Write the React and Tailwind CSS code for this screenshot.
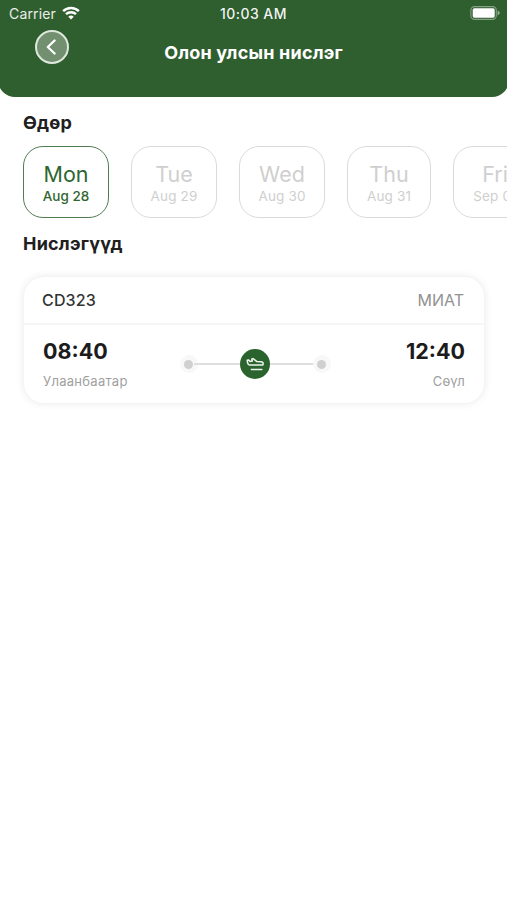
import { useState } from "react";

const DAYS = [
  { day: "Mon", date: "Aug 28", width: "w-[86px]" },
  { day: "Tue", date: "Aug 29", width: "w-[86px]" },
  { day: "Wed", date: "Aug 30", width: "w-[86px]" },
  { day: "Thu", date: "Aug 31", width: "w-[84px]" },
  { day: "Fri", date: "Sep 01", width: "w-[84px]" },
];

function WifiIcon() {
  return (
    <svg className="ml-[6px] h-[14px] w-[18px]" viewBox="0 0 19 14" fill="none" stroke="white" strokeWidth="2.6">
      <path d="M1.2 5.1a11.8 11.8 0 0 1 16.6 0" />
      <path d="M4.2 8.3a7.6 7.6 0 0 1 10.6 0" />
      <path d="M9.5 13.8 6.6 10.9a4.2 4.2 0 0 1 5.8 0z" fill="white" stroke="none" />
    </svg>
  );
}

function BatteryIcon() {
  return (
    <svg className="h-[14px] w-[31px]" viewBox="0 0 31 14" fill="none">
      <rect x="0.9" y="0.6" width="25.4" height="12.8" rx="3.6" stroke="white" strokeOpacity="0.42" strokeWidth="1.1" />
      <rect x="2.7" y="2.3" width="22" height="9.4" rx="1.6" fill="white" />
      <path d="M27.6 4.6c2.8 1 2.8 3.8 0 4.8z" fill="white" fillOpacity="0.5" />
    </svg>
  );
}

function PlaneIcon() {
  return (
    <svg className="mt-[1px] h-[16px] w-[20px]" viewBox="0 0 20 16" fill="none" stroke="#f0f6ee" strokeWidth="1.5" strokeLinejoin="round" strokeLinecap="round">
      <path d="M2.2 3.2 3.5 2.9l1.6 1.6 2.2-.4-.5-2.1 1.3-.4 3.8 3 4 .1c1.5.1 2.3.9 2.2 2.1l-.3 1.3H5.1C3.2 8.1 2.4 6.6 2.2 3.2z" />
      <path d="M6.4 12.4h10.4" />
    </svg>
  );
}

function Header() {
  return (
    <header className="-mx-[2px] h-[97px] rounded-b-[17px] bg-[#2f5e2f] px-[2px] text-white">
      <div className="grid h-[26px] grid-cols-3 items-center pl-[9px] pr-[6px]">
        <div className="flex items-center text-[14px] tracking-[0.15px] text-white/90">
          Carrier
          <WifiIcon />
        </div>
        <div className="whitespace-nowrap pr-[3px] text-center text-[14px] font-medium tracking-[0.45px] text-white/95">10:03 AM</div>
        <div className="flex justify-end">
          <BatteryIcon />
        </div>
      </div>
      <div className="grid grid-cols-[1fr_auto_1fr] items-start pt-[4px]">
        <button className="ml-[35px] flex size-[34px] items-center justify-center rounded-full border-2 border-[#dfe8dd] bg-[#728f70]">
          <svg className="mr-[1px] h-[16px] w-[11px]" viewBox="0 0 11 16" fill="none" stroke="white" strokeWidth="2.3" strokeLinecap="round" strokeLinejoin="round">
            <path d="M8.6 1.5 1.8 8l6.8 6.5" />
          </svg>
        </button>
        <h1 className="mt-[10px] text-[18px] font-bold leading-[26px] tracking-[0.2px]">Олон улсын нислэг</h1>
      </div>
    </header>
  );
}

function DayCard({ item, active, onClick }) {
  return (
    <button
      onClick={onClick}
      className={`${item.width} h-[72px] shrink-0 rounded-[20px] border-[1.5px] pt-[2px] text-center ${
        active ? "border-[#4f7d50] text-[#2f6630]" : "border-[#dadada] text-[#cfcfcf]"
      }`}
    >
      <div className="text-[21.5px] leading-[25px]">{item.day}</div>
      <div className={`whitespace-nowrap text-[13.5px] leading-[18px] ${active ? "font-medium" : "tracking-[0.15px]"}`}>
        {item.date}
      </div>
    </button>
  );
}

function Dot() {
  return (
    <span className="flex size-[18px] shrink-0 items-center justify-center rounded-full bg-[#f8f8f8]">
      <span className="size-[9px] rounded-full bg-[#d0d0d0]" />
    </span>
  );
}

function FlightCard() {
  return (
    <div className="mx-[24px] mt-[20px] h-[126px] w-[460px] rounded-[20px] bg-white shadow-[0_0_9px_rgba(0,0,0,0.1)]">
      <div className="flex h-[48px] items-center justify-between border-b-2 border-[#f6f6f6] pl-[18px] pr-[20px]">
        <span className="text-[16px] font-medium tracking-[0.15px] text-[#333]">CD323</span>
        <span className="text-[16px] text-[#929292]">МИАТ</span>
      </div>
      <div className="grid grid-cols-[1fr_151px_1fr] px-[19px] pt-[12px]">
        <div>
          <div className="text-[21.5px] font-bold leading-[28px] text-[#1c1c1c]">08:40</div>
          <div className="mt-[6px] text-[13px] leading-[20px] tracking-[0.28px] text-[#a0a0a0]">Улаанбаатар</div>
        </div>
        <div className="ml-[1px] mt-[12px] -mr-[1px] flex h-[30px] items-center">
          <Dot />
          <span className="-ml-[4px] h-[1.5px] flex-1 bg-[#dedede]" />
          <span className="flex size-[30px] items-center justify-center rounded-full bg-[#2a632d]">
            <PlaneIcon />
          </span>
          <span className="-mr-[4px] h-[1.5px] flex-1 bg-[#dedede]" />
          <Dot />
        </div>
        <div className="text-right">
          <div className="text-[21.5px] font-bold leading-[28px] text-[#1c1c1c]">12:40</div>
          <div className="mt-[6px] text-[13px] leading-[20px] tracking-[0.28px] text-[#a0a0a0]">Сөүл</div>
        </div>
      </div>
    </div>
  );
}

export default function App() {
  const [selected, setSelected] = useState(0);

  return (
    <div className="h-[900px] w-[507px] overflow-hidden bg-white font-['Inter',sans-serif]">
      <Header />
      <h2 className="ml-[23px] mt-[13px] text-[18px] font-bold leading-[26px] tracking-[0.2px] text-[#202020]">Өдөр</h2>
      <div className="mt-[10px] flex gap-[22px] overflow-hidden pl-[23px]">
        {DAYS.map((item, i) => (
          <DayCard key={item.day} item={item} active={i === selected} onClick={() => setSelected(i)} />
        ))}
      </div>
      <h2 className="ml-[23px] mt-[13px] text-[18px] font-bold leading-[26px] tracking-[0.2px] text-[#202020]">Нислэгүүд</h2>
      <FlightCard />
    </div>
  );
}
